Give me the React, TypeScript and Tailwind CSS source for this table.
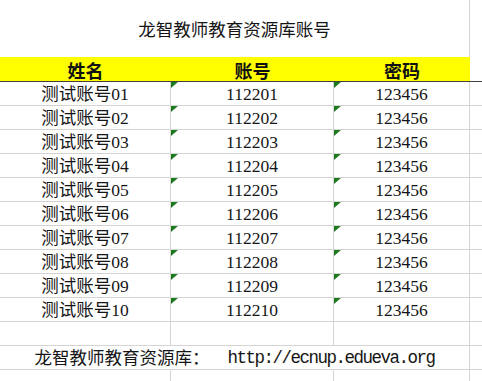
const rows = Array.from({ length: 10 }, (_, i) => {
  const n = String(i + 1).padStart(2, "0");
  return { name: `测试账号${n}`, account: `1122${n}`, password: "123456" };
});

const line = "border-[#d4d4d4]";
const body = "font-['Liberation_Serif','Noto_Sans_CJK_SC',serif] text-[17.5px] text-[#151515]";

function Flag() {
  return (
    <svg className="absolute left-0 top-0" width="7" height="6" viewBox="0 0 7 6">
      <polygon points="0,0 7,0 0,6" fill="#1f7a1f" />
    </svg>
  );
}

export default function App() {
  return (
    <div className="h-[381px] w-[482px] overflow-hidden bg-white">
      <div className="grid grid-cols-[171px_163px_136px_1fr]">
        {/* Title */}
        <div
          className={`col-span-3 flex h-[57px] items-center justify-center border-r pt-1 ${line} ${body}`}
        >
          龙智教师教育资源库账号
        </div>
        <div className="h-[57px]" />

        {/* Header */}
        <div className="col-span-3 grid h-[25px] grid-cols-[171px_163px_136px] border-b border-[#404040] bg-[#ffff00] font-['Noto_Sans_CJK_SC',sans-serif] text-[18px] font-bold leading-none text-[#111]">
          <div className="flex items-center justify-center pt-[2px]">姓名</div>
          <div className="flex items-center justify-center pt-[2px]">账号</div>
          <div className="flex items-center justify-center pt-[2px]">密码</div>
        </div>
        <div className="h-[25px] border-b border-[#404040]" />

        {/* Rows */}
        {rows.map((r) => (
          <div key={r.name} className="contents">
            <div className={`flex h-6 items-center justify-center border-r border-b pt-[2px] leading-none ${line} ${body}`}>
              {r.name}
            </div>
            <div className={`relative flex h-6 items-center justify-center border-r border-b pt-[2px] leading-none ${line} ${body}`}>
              <Flag />
              {r.account}
            </div>
            <div className={`relative flex h-6 items-center justify-center border-r border-b pt-[2px] leading-none ${line} ${body}`}>
              <Flag />
              {r.password}
            </div>
            <div className={`h-6 border-b ${line}`} />
          </div>
        ))}

        {/* Empty row */}
        <div className={`h-6 border-r border-b ${line}`} />
        <div className={`h-6 border-r border-b ${line}`} />
        <div className={`h-6 border-r border-b ${line}`} />
        <div className={`h-6 border-b ${line}`} />

        {/* Footer */}
        <div
          className={`col-span-3 flex h-6 items-center justify-center whitespace-pre border-r border-b pt-[2px] leading-none ${line} ${body}`}
        >
          龙智教师教育资源库：
          <span className="font-['Liberation_Mono',monospace] tracking-[-1.5px]">  http://ecnup.edueva.org</span>
        </div>
        <div className={`h-6 border-b ${line}`} />

        {/* Trailing row */}
        <div className={`h-6 border-r border-b ${line}`} />
        <div className={`h-6 border-r border-b ${line}`} />
        <div className={`h-6 border-r border-b ${line}`} />
        <div className={`h-6 border-b ${line}`} />
      </div>
    </div>
  );
}
